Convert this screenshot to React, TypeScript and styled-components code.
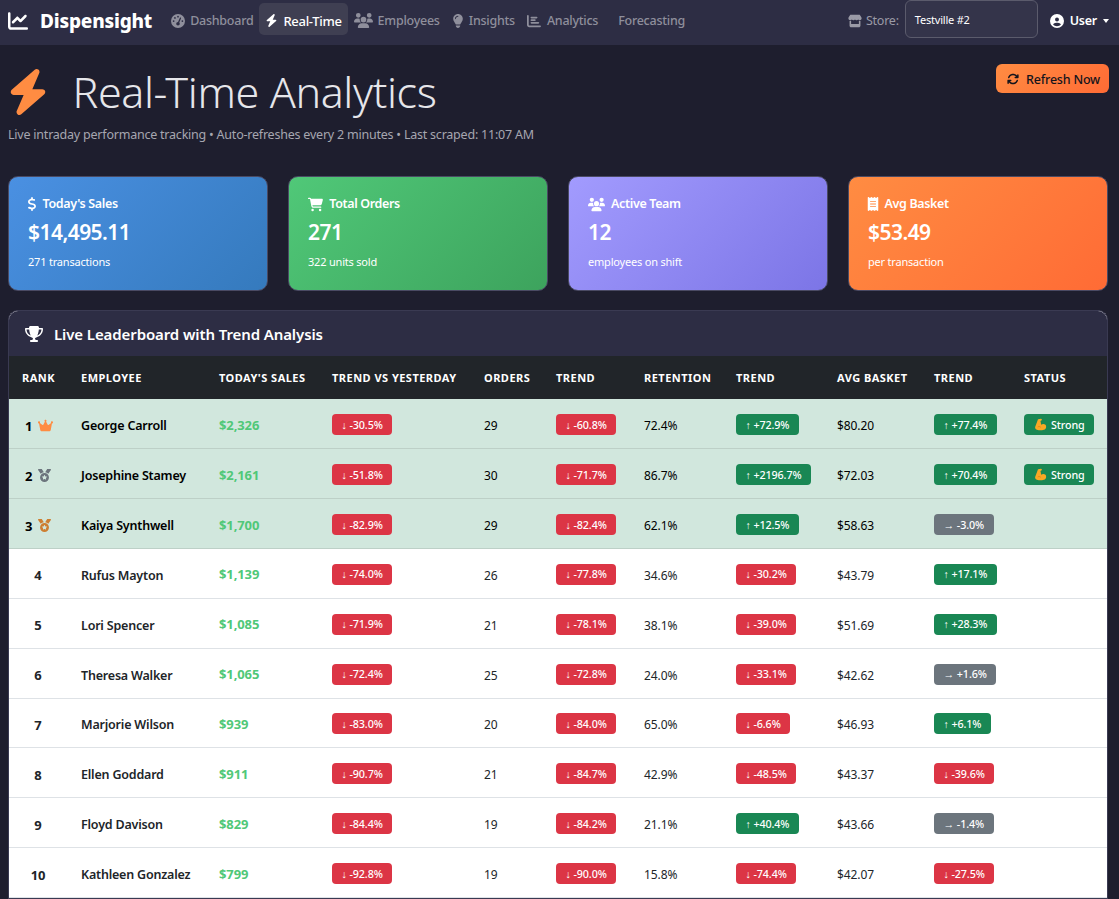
import React from "react";
import styled, { createGlobalStyle } from "styled-components";
import {
  FaChartLine, FaGaugeHigh, FaBolt, FaUsers, FaLightbulb, FaChartBar, FaStore, FaCircleUser,
  FaArrowsRotate, FaDollarSign, FaCartShopping, FaReceipt, FaTrophy, FaCrown, FaMedal,
} from "react-icons/fa6";

const Global = createGlobalStyle`
  html, body { margin: 0; padding: 0; background: #1e1e2e; }
  body { font-family: "Noto Sans", "Open Sans", sans-serif; color: #fff; font-size: 14px; }
  * { box-sizing: border-box; }
`;

const Nav = styled.nav`
  height: 45px; background: #2d2d44; display: flex; align-items: center; padding: 0 8px 4px;
`;
const Brand = styled.div`
  display: flex; align-items: center; gap: 12px; font-size: 19px; font-weight: 800; color: #fff; margin-right: 13px; letter-spacing: -0.2px;
`;
const NavLink = styled.a<{ $active?: boolean }>`
  display: flex; align-items: center; gap: 5px; height: 32px; padding: 3px 6px 0; border-radius: 5px; align-self: flex-start; margin-top: 3px;
  font-size: ${(p) => (p.$active ? "13px" : "12.5px")}; font-weight: 500;
  color: ${(p) => (p.$active ? "#fff" : "#8f8f9c")};
  background: ${(p) => (p.$active ? "#3f3f52" : "transparent")};
  letter-spacing: ${(p) => (p.$active ? "-0.3px" : "-0.25px")};
`;
const BulbIcon = styled(FaLightbulb)`margin: 0 -1px;`;
const BarsIcon = styled(FaChartBar)`margin-right: 1px;`;
const MissingIcon = styled.span`display: block; width: 3px;`;
const Spacer = styled.div`flex: 1;`;
const StoreLabel = styled.span`
  display: flex; align-items: center; gap: 4px; color: #9a9aa6; font-size: 12.5px; margin-right: 6px; letter-spacing: -0.25px;
`;
const StoreSelect = styled.div`
  width: 133px; height: 38px; display: flex; align-items: center; border: 1px solid #5b5b6c; border-radius: 6px; background: #34344a; color: #fff;
  font-size: 11px; padding: 0 9px; align-self: flex-start; letter-spacing: -0.2px;
`;
const UserMenu = styled.div`
  display: flex; align-items: center; gap: 6px; font-size: 12.5px; font-weight: 600; color: #fff; margin-left: 12px; margin-right: 2px; letter-spacing: -0.25px;
`;
const Caret = styled.span`
  width: 0; height: 0; border-left: 3.5px solid transparent; border-right: 3.5px solid transparent; border-top: 4px solid #fff;
`;
const Main = styled.main`padding: 0 11px 0 8px;`;
const Header = styled.header`
  display: flex; justify-content: space-between; align-items: flex-start; height: 131px; padding-top: 19px;
`;
const TitleRow = styled.h1`
  margin: 0; display: flex; align-items: center; gap: 27.5px; font-size: 43px; line-height: 56px; font-weight: 300; color: #e6e6ea; letter-spacing: -0.38px;
`;
const IconSlot = styled.span<{ $w: number }>`
  display: flex; justify-content: center; align-items: center; flex: none; width: ${(p) => p.$w}px;
  svg { flex: none; }
`;
const TitleIcon = styled(IconSlot)`margin-left: 3px;`;
const Subtitle = styled.p`
  margin: 6px 0 0; font-size: 12.5px; line-height: 18px; color: #a6a6b0; letter-spacing: -0.22px;
`;
const RefreshButton = styled.button`
  display: flex; align-items: center; gap: 7px; height: 29px; padding: 1px 9px 0 11px; border: 0; border-radius: 6px; margin-right: -1px;
  background: linear-gradient(135deg, #ff8c42, #ff6b35); color: #14141c; font: 500 12.5px "Noto Sans", sans-serif; letter-spacing: -0.2px;
`;
const Cards = styled.section`
  display: grid; grid-template-columns: repeat(4, 1fr); gap: 20px; margin-bottom: 19px;
`;
const Card = styled.article<{ $from: string; $to: string }>`
  height: 115px; padding: 18px 19px; border-radius: 10px; border: 1px solid #4a4a63; color: #fff;
  background: linear-gradient(135deg, ${(p) => p.$from}, ${(p) => p.$to});
`;
const CardTitle = styled.div`
  display: flex; align-items: center; gap: 6.5px; font-size: 12.5px; font-weight: 600; line-height: 18px; letter-spacing: -0.35px;
`;
const CardValue = styled.div`
  font-size: 21px; font-weight: 600; line-height: 32px; margin-top: 3px; letter-spacing: -0.55px;
`;
const CardNote = styled.div`
  font-size: 11px; line-height: 15px; margin-top: 6px; letter-spacing: -0.2px;
`;
const Panel = styled.section`
  border: 1px solid #3a3a52; border-radius: 10px 10px 0 0; overflow: hidden; background: #fff;
`;
const PanelHead = styled.div`
  height: 45px; background: #2d2d44; display: flex; align-items: center; gap: 11px; padding: 0 16px; font-size: 15px; font-weight: 600; color: #fff; letter-spacing: -0.1px;
`;
const Table = styled.table`
  width: 100%; table-layout: fixed; border-collapse: collapse; color: #212529;
`;
const HeadCell = styled.th`
  height: 43px; background: #212529; color: #fff; text-align: left; padding: 0 0 0 13px; font-size: 11px; font-weight: 700; letter-spacing: 0.47px; text-transform: uppercase; white-space: nowrap;
`;
const Row = styled.tr<{ $top?: boolean }>`
  height: 49.85px; background: ${(p) => (p.$top ? "#d1e7dd" : "#fff")}; color: ${(p) => (p.$top ? "#000" : "#212529")};
  border-bottom: 1px solid ${(p) => (p.$top ? "#bdd0c7" : "#dee2e6")};
`;
const Cell = styled.td`
  padding: 4px 0 0 13px; font-size: 12px; white-space: nowrap; letter-spacing: -0.1px;
`;
const BadgeCell = styled(Cell)`padding-top: 2px;`;
const RankCell = styled(Cell)`
  padding-left: 0; font-weight: 700; font-size: 13px;
`;
const RankInner = styled.div`
  display: flex; align-items: center; gap: 6px; padding-left: 16px; width: 100%;
`;
const RankNum = styled.span<{ $solo?: boolean }>`
  ${(p) => (p.$solo ? "width: 28px; text-align: center; margin-left: -1px;" : "")}
`;
const Name = styled(Cell)`font-weight: 600; font-size: 12.5px; letter-spacing: -0.2px;`;
const Sales = styled(Cell)`padding-top: 2px; font-weight: 700; font-size: 13px; color: #50c878; letter-spacing: -0.1px;`;
const Badge = styled.span<{ $tone: "down" | "up" | "flat" }>`
  display: inline-flex; align-items: center; gap: 4px; height: 21px; padding: 0 9.5px; border-radius: 4px; font-size: 10.75px; font-weight: 500; color: #fff; letter-spacing: -0.12px;
  background: ${(p) => (p.$tone === "down" ? "#dc3545" : p.$tone === "up" ? "#198754" : "#6c757d")};
`;
const Muscle = styled.svg`width: 13px; height: 13px; margin-left: 0.5px;`;

const MuscleIcon = () => (
  <Muscle viewBox="0 0 16 16" aria-hidden="true">
    <path d="M5.2 1.6 8.6 1c1 0 1.4 1 .9 1.7L8 3.6l.8 4.6c1.4-1.2 3.9-1.3 5.3.1 1.4 1.5 1.2 4.6-.8 5.9-2.2 1.3-6.8 1.3-9.8.3-1.7-.6-2.5-2-2-3.6L4.5 2.7c.1-.5.3-1 .7-1.1z" fill="#f9a825" />
    <path d="M4.6 11c1.5-.9 3-.5 3.7.5" stroke="#e07f10" strokeWidth="1" fill="none" />
  </Muscle>
);

type Tone = "down" | "up" | "flat";
const arrow = (t: Tone) => (t === "down" ? "↓" : t === "up" ? "↑" : "→");
const toneOf = (v: string): Tone => (v[0] === "~" ? "flat" : v[0] === "+" ? "up" : "down");
const Trend = ({ v }: { v: string }) => {
  const tone = toneOf(v);
  return <Badge $tone={tone}>{arrow(tone)} {v.replace("~", "")}</Badge>;
};

const rows = [
  ["George Carroll", "$2,326", "-30.5%", "29", "-60.8%", "72.4%", "+72.9%", "$80.20", "+77.4%", true],
  ["Josephine Stamey", "$2,161", "-51.8%", "30", "-71.7%", "86.7%", "+2196.7%", "$72.03", "+70.4%", true],
  ["Kaiya Synthwell", "$1,700", "-82.9%", "29", "-82.4%", "62.1%", "+12.5%", "$58.63", "~-3.0%", false],
  ["Rufus Mayton", "$1,139", "-74.0%", "26", "-77.8%", "34.6%", "-30.2%", "$43.79", "+17.1%", false],
  ["Lori Spencer", "$1,085", "-71.9%", "21", "-78.1%", "38.1%", "-39.0%", "$51.69", "+28.3%", false],
  ["Theresa Walker", "$1,065", "-72.4%", "25", "-72.8%", "24.0%", "-33.1%", "$42.62", "~+1.6%", false],
  ["Marjorie Wilson", "$939", "-83.0%", "20", "-84.0%", "65.0%", "-6.6%", "$46.93", "+6.1%", false],
  ["Ellen Goddard", "$911", "-90.7%", "21", "-84.7%", "42.9%", "-48.5%", "$43.37", "-39.6%", false],
  ["Floyd Davison", "$829", "-84.4%", "19", "-84.2%", "21.1%", "+40.4%", "$43.66", "~-1.4%", false],
  ["Kathleen Gonzalez", "$799", "-92.8%", "19", "-90.0%", "15.8%", "-74.4%", "$42.07", "-27.5%", false],
] as const;

const widths = [59, 138, 113, 152, 72, 88, 92, 101, 97, 90, 96];
const heads = ["Rank", "Employee", "Today's Sales", "Trend vs Yesterday", "Orders", "Trend", "Retention", "Trend", "Avg Basket", "Trend", "Status"];
const rankIcons = [
  <FaCrown size={15} color="#ff8c42" />,
  <FaMedal size={13} color="#6c757d" />,
  <FaMedal size={13} color="#cd7f32" />,
];

const links = [
  { icon: <FaGaugeHigh size={14} />, label: "Dashboard" },
  { icon: <FaBolt size={13} />, label: "Real-Time", active: true },
  { icon: <FaUsers size={19} />, label: "Employees" },
  { icon: <BulbIcon size={14} />, label: "Insights" },
  { icon: <BarsIcon size={14} />, label: "Analytics" },
  { icon: <MissingIcon />, label: "Forecasting" },
];

const cards = [
  { from: "#4a90e2", to: "#357abd", w: 8, icon: <FaDollarSign size={14} />, title: "Today's Sales", value: "$14,495.11", note: "271 transactions" },
  { from: "#50c878", to: "#3da35d", w: 14.75, icon: <FaCartShopping size={15} />, title: "Total Orders", value: "271", note: "322 units sold" },
  { from: "#a29bfe", to: "#7c75e6", w: 16.5, icon: <FaUsers size={17} />, title: "Active Team", value: "12", note: "employees on shift" },
  { from: "#ff8c42", to: "#ff6b35", w: 10, icon: <FaReceipt size={14} />, title: "Avg Basket", value: "$53.49", note: "per transaction" },
];

export default function App() {
  return (
    <>
      <Global />
      <Nav>
        <Brand><FaChartLine size={20} />Dispensight</Brand>
        {links.map((l) => (
          <NavLink key={l.label} $active={l.active}>{l.icon}{l.label}</NavLink>
        ))}
        <Spacer />
        <StoreLabel><FaStore size={14} />Store:</StoreLabel>
        <StoreSelect>Testville #2</StoreSelect>
        <UserMenu><FaCircleUser size={14} />User<Caret /></UserMenu>
      </Nav>
      <Main>
        <Header>
          <div>
            <TitleRow><TitleIcon $w={34}><FaBolt size={46} color="#ff8c42" /></TitleIcon>Real-Time Analytics</TitleRow>
            <Subtitle>Live intraday performance tracking • Auto-refreshes every 2 minutes • Last scraped: 11:07 AM</Subtitle>
          </div>
          <RefreshButton><FaArrowsRotate size={12} />Refresh Now</RefreshButton>
        </Header>
        <Cards>
          {cards.map((c) => (
            <Card key={c.title} $from={c.from} $to={c.to}>
              <CardTitle><IconSlot $w={c.w}>{c.icon}</IconSlot>{c.title}</CardTitle>
              <CardValue>{c.value}</CardValue>
              <CardNote>{c.note}</CardNote>
            </Card>
          ))}
        </Cards>
        <Panel>
          <PanelHead><FaTrophy size={18} />Live Leaderboard with Trend Analysis</PanelHead>
          <Table>
            <colgroup>
              {widths.map((w, i) => <col key={i} style={{ width: w }} />)}
            </colgroup>
            <thead>
              <tr>{heads.map((h, i) => <HeadCell key={i}>{h}</HeadCell>)}</tr>
            </thead>
            <tbody>
              {rows.map((r, i) => (
                <Row key={r[0]} $top={i < 3}>
                  <RankCell>
                    <RankInner>
                      <RankNum $solo={i >= 3}>{i + 1}</RankNum>
                      {rankIcons[i]}
                    </RankInner>
                  </RankCell>
                  <Name>{r[0]}</Name>
                  <Sales>{r[1]}</Sales>
                  <BadgeCell><Trend v={r[2]} /></BadgeCell>
                  <Cell>{r[3]}</Cell>
                  <BadgeCell><Trend v={r[4]} /></BadgeCell>
                  <Cell>{r[5]}</Cell>
                  <BadgeCell><Trend v={r[6]} /></BadgeCell>
                  <Cell>{r[7]}</Cell>
                  <BadgeCell><Trend v={r[8]} /></BadgeCell>
                  <BadgeCell>{r[9] && <Badge $tone="up"><MuscleIcon />Strong</Badge>}</BadgeCell>
                </Row>
              ))}
            </tbody>
          </Table>
        </Panel>
      </Main>
    </>
  );
}
